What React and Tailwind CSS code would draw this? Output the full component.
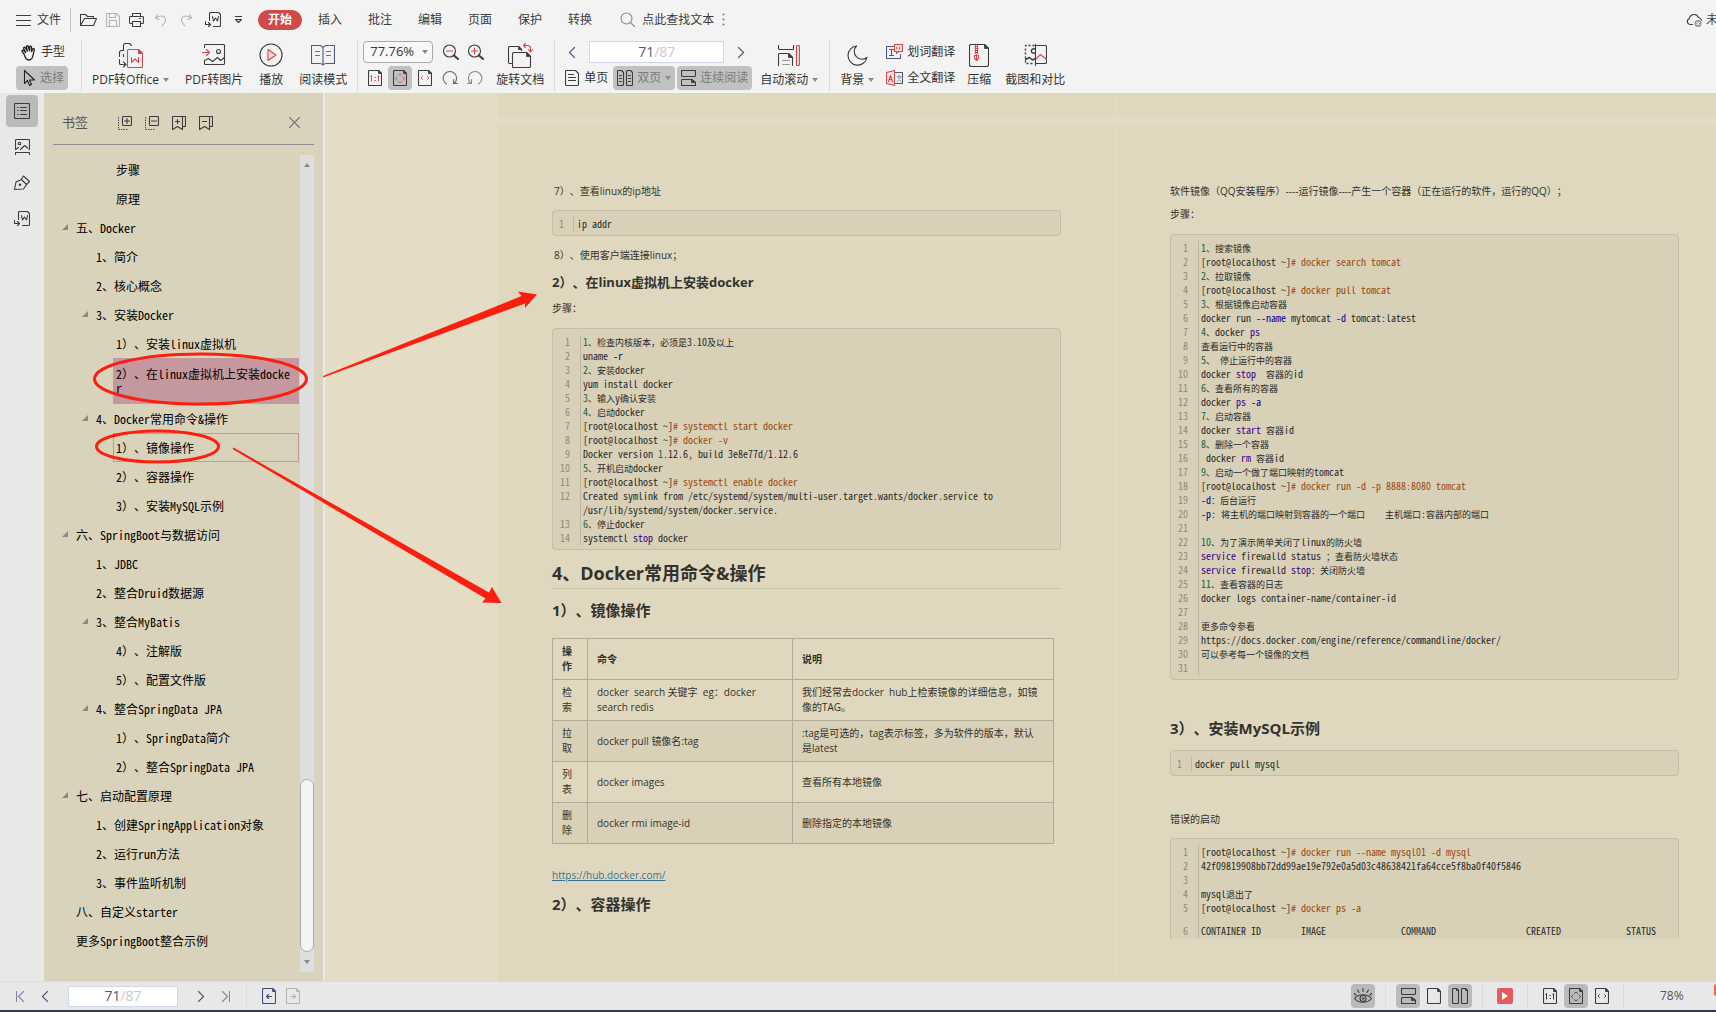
import { Fragment } from "react";

const ink = "#3c3c3c";
const red = "#d04a4b";

// The half-pixel origin keeps strokes on whole coordinates sharp
function Icon({ w = 16, h = w, color = ink, className = "", children }) {
  return (
    <svg
      width={w}
      height={h}
      viewBox={`-0.5 -0.5 ${w} ${h}`}
      fill="none"
      stroke={color}
      strokeWidth="1.1"
      strokeLinecap="round"
      strokeLinejoin="round"
      className={`shrink-0 ${className}`}
      aria-hidden="true"
    >
      {children}
    </svg>
  );
}

const Caret = () => (
  <svg width="6" height="4" viewBox="0 0 6 4" className="shrink-0" aria-hidden="true">
    <path d="M0 0h6L3 4z" fill="#8a8a8a" />
  </svg>
);

const sheet = "M1 0h9l3 3v11a1 1 0 0 1-1 1H1a1 1 0 0 1-1-1V1a1 1 0 0 1 1-1z";

const FoldCorner = () => <path d="M10 0v3h3z" fill={ink} strokeWidth="0.8" />;

function OneToOne({ tint = red }) {
  return (
    <Icon w={14} h={16}>
      <path d={sheet} />
      <FoldCorner />
      <path d="M2 6l1-1v6M9 6l1-1v6M6 7h1.400M6 10h1.400" stroke={tint} strokeLinecap="butt" strokeWidth="1" />
    </Icon>
  );
}

function FitPage({ tint = red }) {
  return (
    <Icon w={14} h={16}>
      <path d={sheet} />
      <FoldCorner />
      <path d="M5 4.800L6.500 3.500 8 4.800M5 11.200l1.500 1.300L8 11.200M3.300 6.500L2 8l1.300 1.500M9.700 6.500L11 8 9.700 9.500" stroke={tint} strokeWidth="0.9" />
    </Icon>
  );
}

function FitWidth({ tint = red }) {
  return (
    <Icon w={14} h={16}>
      <path d={sheet} />
      <FoldCorner />
      <path d="M4 6L2.500 7.500 4 9M9 6l1.500 1.500L9 9" stroke={tint} strokeWidth="0.9" />
    </Icon>
  );
}

const TwoPages = () => (
  <Icon w={16}>
    <path d="M1 0h3l2 2v12a1 1 0 0 1-1 1H1a1 1 0 0 1-1-1V1a1 1 0 0 1 1-1zM10 0h3l2 2v12a1 1 0 0 1-1 1h-4a1 1 0 0 1-1-1V1a1 1 0 0 1 1-1z" />
    <path d="M4 0v2h2zM13 0v2h2z" fill={ink} strokeWidth="0.8" />
  </Icon>
);

const TwoPagesText = () => (
  <Icon w={16}>
    <path d="M1 0h3l2 2v12a1 1 0 0 1-1 1H1a1 1 0 0 1-1-1V1a1 1 0 0 1 1-1zM10 0h3l2 2v12a1 1 0 0 1-1 1h-4a1 1 0 0 1-1-1V1a1 1 0 0 1 1-1z" />
    <path d="M2 5h2M2 8h2M2 11h2M11 5h2M11 8h2M11 11h2" />
  </Icon>
);

const Continuous = () => (
  <Icon w={15} h={16}>
    <path d="M0 0v5a1 1 0 0 0 1 1h12a1 1 0 0 0 1-1V0zM0 15v-5a1 1 0 0 1 1-1h9l4 3v3z" />
    <path d="M10 9v3h4z" fill={ink} strokeWidth="0.8" />
  </Icon>
);

const WordExport = () => (
  <Icon w={16}>
    <path d="M4 8V1a1 1 0 0 1 1-1h8l2 2v11a1 1 0 0 1-1 1H8" />
    <path d="M7 4l1 4.500 2-3 2 3L13 4M0 9v3h5M3 10l2 2-2 2" />
  </Icon>
);

const Chevron = ({ left, bar, color = "#4b5a7a" }) => (
  <Icon w={10} h={11} color={color}>
    <path d={left ? "M7 0L2 5l5 5" : "M2 0l5 5-5 5"} />
    {bar && <path d={left ? "M0 0v10" : "M9 0v10"} />}
  </Icon>
);

const Sep = ({ className = "" }) => (
  <span className={`w-px shrink-0 bg-[#dcdcdc] ${className}`} />
);

function Tool({ icon, label, caret }) {
  return (
    <button className="flex h-[50px] shrink-0 flex-col items-center justify-between whitespace-nowrap leading-5">
      <span className="flex h-[30px] items-center">{icon}</span>
      <span className="flex items-center gap-1">
        {label}
        {caret && <Caret />}
      </span>
    </button>
  );
}

const OfficeIcon = () => (
  <Icon w={25} h={25}>
    <path d="M5 7V2a2 2 0 0 1 2-2h4l2 2M5 7H3a2 2 0 0 0-2 2v4M5 11v2M1 16v4a1 1 0 0 0 1 1h5M5 18.500L7.500 21 5 23.500" />
    <path d="M10 6h10l4 4v13a1 1 0 0 1-1 1H10a1 1 0 0 1-1-1V7a1 1 0 0 1 1-1z" stroke={red} />
    <path d="M20 6v4h4z" fill={red} stroke={red} />
    <path d="M13 14v5l3.500-3.500L20 19v-5" stroke={red} />
  </Icon>
);

const PictureIcon = () => (
  <Icon w={24} h={22}>
    <path d="M2 3V1a1 1 0 0 1 1-1h18a1 1 0 0 1 1 1v18a1 1 0 0 1-1 1H3a1 1 0 0 1-1-1v-3l4-2 4 3 5-4 3 3 4-3" />
    <circle cx="16" cy="7" r="2" />
    <path d="M0 8h6M4 5l3 3-3 3" stroke={red} />
  </Icon>
);

const PlayIcon = () => (
  <Icon w={24} h={24}>
    <circle cx="11.500" cy="11.500" r="11" />
    <path d="M8.500 6v11l8-5.500z" stroke={red} fill="#f3dcdc" />
  </Icon>
);

const BookIcon = () => (
  <Icon w={24} h={21} color="#4b5a7a">
    <path d="M11.500 2C10.500.500 10 0 8 0H0v18h8c1.500 0 3 .500 3.500 1.500C12 18.500 13.500 18 15 18h8V0h-8c-2 0-2.500.500-3.500 2zM11.500 2v17.500" />
    <path d="M4 6h4M4 10h4M15 6h4M15 10h4" stroke={red} />
  </Icon>
);

const RotateDocIcon = () => (
  <Icon w={26} h={25}>
    <path d="M4 20H2a1 1 0 0 1-1-1V4a1 1 0 0 1 1-1h9l3 3v1" />
    <path d="M6 9h13l4 4v10a1 1 0 0 1-1 1H6a1 1 0 0 1-1-1V10a1 1 0 0 1 1-1z" />
    <path d="M11 3v3h3zM19 9v4h4z" fill={ink} strokeWidth="0.8" />
    <path d="M16 2h4a3 3 0 0 1 3 3v3M18 0l-2 2 2 2M21 6l2 2.500L25 6" stroke={red} />
  </Icon>
);

const AutoScrollIcon = () => (
  <Icon w={22} h={21}>
    <path d="M0 0v3a1 1 0 0 0 1 1h13a1 1 0 0 0 1-1V0M0 20V9a1 1 0 0 1 1-1h9l4 4v8" />
    <path d="M10 8v4h4z" fill={ink} strokeWidth="0.8" />
    <path d="M4 15h7M4 19h7" stroke="#999" />
    <rect x="18" y="0" width="3" height="20" rx="1" stroke={red} fill="#f3dcdc" />
  </Icon>
);

const MoonIcon = () => (
  <Icon w={21} h={21}>
    <path d="M9 .5A9.600 9.600 0 1 0 19.500 12 7.800 7.800 0 0 1 9 .5z" />
  </Icon>
);

const ZipIcon = () => (
  <Icon w={20} h={23}>
    <path d="M1 0h14l4 4v16a2 2 0 0 1-2 2H2a2 2 0 0 1-2-2V1z" />
    <path d="M15 0v4h4z" fill={ink} strokeWidth="0.8" />
    <path d="M6 1v8M8 1v8M5.500 2H7M7 4h1.500M5.500 6H7M7 8h1.500M7 10v5M5 11v3l2 2 2-2v-3z" stroke={red} />
  </Icon>
);

const CompareIcon = () => (
  <Icon w={23} h={22}>
    <path d="M10 1H1v18h9" strokeDasharray="2 2" strokeWidth="1.400" strokeLinecap="butt" />
    <path d="M11 0v21M12 1h9a1 1 0 0 1 1 1v16a1 1 0 0 1-1 1h-9" />
    <path d="M1 15l4-2 3 2.500 3-1.500M10 4.500a2.200 2.200 0 1 0 0 4" strokeWidth="1.400" />
    <path d="M12 14l4-4 6 5" stroke={red} />
  </Icon>
);

const HandIcon = () => (
  <Icon w={17} h={17} color="#222">
    <path d="M3.500 9.500L1.600 7.200c-.7-1 .6-2 1.500-1.100l2 2-2-4.200c-.4-1.100 1.200-1.700 1.800-.6l1.900 3.400L6 2.300c-.2-1.200 1.500-1.400 1.800-.3l1.200 4.300.3-3.900c.1-1.100 1.700-1 1.700.2v4.500l1.200-2.500c.5-1 1.900-.4 1.600.7L12.700 10c-.3 2.500-.7 5.500-4.500 5.500-3 0-3.800-3-4.700-6z" strokeWidth="1.300" />
  </Icon>
);

const CursorIcon = () => (
  <Icon w={12} h={17} color="#222">
    <path d="M1 0v13l3-3 2 5 2-1-2-4.500h5z" />
  </Icon>
);

function TopBar() {
  const tabs = ["插入", "批注", "编辑", "页面", "保护", "转换"];
  return (
    <div className="flex h-9 items-center pl-4 pt-1">
      <button className="flex items-center gap-[6px]">
        <Icon w={15} h={11}>
          <path d="M0 0h14M0 5h14M0 10h14" />
        </Icon>
        文件
      </button>
      <Sep className="mx-[9px] h-6 !bg-[#c4c4c4]" />
      <div className="flex items-center gap-[9px]">
        <button aria-label="打开">
          <Icon w={17} h={13}>
            <path d="M0 11V0h5l2 2h6v2M0 11l4-7h12l-3 7z" />
          </Icon>
        </button>
        <button aria-label="保存">
          <Icon w={14} h={14} color="#b5b5b5">
            <path d="M0 0h10l3 3v10H0zM3 0v4h6V0M3 13V7h7v6" />
          </Icon>
        </button>
        <button aria-label="打印">
          <Icon w={15} h={14}>
            <path d="M3 3V0h8v3M3 10H1a1 1 0 0 1-1-1V4a1 1 0 0 1 1-1h12a1 1 0 0 1 1 1v5a1 1 0 0 1-1 1h-2M3 8h8v5H3zM10 5h1" />
          </Icon>
        </button>
        <button aria-label="撤销">
          <Icon w={16} h={14} color="#b5b5b5">
            <path d="M4 1L2 4.500 5.500 6M2.500 4.500C7 1 12.500 2.500 12 7c-.3 2.500-2 4-3.500 5.500" />
          </Icon>
        </button>
        <button aria-label="重做">
          <Icon w={16} h={14} color="#b5b5b5">
            <path d="M11 1l2 3.500L9.500 6M12.500 4.500C8 1 2.500 2.500 3 7c.3 2.500 2 4 3.500 5.500" />
          </Icon>
        </button>
        <button aria-label="转换为Word" className="ml-[2px]">
          <WordExport />
        </button>
        <button aria-label="更多" className="ml-1">
          <Icon w={9} h={8}>
            <path d="M1 0h6M1 3h6L4 6z" />
          </Icon>
        </button>
      </div>
      <button className="ml-[15px] h-5 rounded-full bg-[#d04a4b] px-[10px] font-bold text-white">
        开始
      </button>
      <div className="ml-4 flex gap-[26px]">
        {tabs.map((t) => (
          <button key={t}>{t}</button>
        ))}
      </div>
      <label className="ml-7 flex items-center gap-[6px]">
        <Icon w={16} color="#8a8a8a">
          <circle cx="6" cy="6" r="5.500" />
          <path d="M10.500 10.500L14 14" />
        </Icon>
        <input
          aria-label="点此查找文本"
          placeholder="点此查找文本"
          className="w-[74px] bg-transparent outline-none placeholder:text-[#3c3c3c]"
        />
      </label>
      <Icon w={4} h={14} color="#777" className="ml-[6px]">
        <path d="M1 1v.1M1 6v.1M1 11v.1" strokeWidth="2" />
      </Icon>
      <button className="ml-auto flex w-[30px] shrink-0 items-center gap-[3px] overflow-hidden whitespace-nowrap">
        <Icon w={17} h={15}>
          <path d="M6 11H3.500a3 3 0 0 1-.7-5.800A4.800 4.800 0 0 1 12 4a3.800 3.800 0 0 1 3 3" />
          <circle cx="11.500" cy="10" r="3" fill="#999" stroke="#999" />
          <path d="M10.300 8.800l2.400 2.400M12.700 8.800l-2.400 2.400" stroke="#f3f3f3" />
        </Icon>
        未
      </button>
    </div>
  );
}

function Ribbon() {
  return (
    <div className="flex h-[57px] items-start pl-4 pt-1 text-[#333]">
      <div className="flex flex-col gap-[2px]">
        <button className="flex h-6 items-center gap-1 pl-1">
          <HandIcon />
          手型
        </button>
        <button className="flex h-6 w-[52px] items-center gap-[5px] rounded bg-[#c1c1c1] pl-[7px] text-[#7b7b7b]">
          <CursorIcon />
          选择
        </button>
      </div>
      <Sep className="ml-[13px] mr-[10px] h-[52px]" />
      <div className="flex gap-4">
        <Tool icon={<OfficeIcon />} label="PDF转Office" caret />
        <Tool icon={<PictureIcon />} label="PDF转图片" />
        <Tool icon={<PlayIcon />} label="播放" />
        <Tool icon={<BookIcon />} label="阅读模式" />
      </div>
      <Sep className="ml-[10px] mr-[5px] h-[52px]" />
      <div className="flex flex-col gap-[2px]">
        <div className="flex h-6 items-center">
          <div className="relative">
            <select
              aria-label="缩放"
              className="h-[22px] w-[70px] appearance-none rounded border border-[#a9a9a9] bg-[#f8f8f8] pl-[6px] text-[13px]"
            >
              <option>77.76%</option>
            </select>
            <span className="pointer-events-none absolute right-[5px] top-[9px]">
              <Caret />
            </span>
          </div>
          <button aria-label="缩小" className="ml-[9px]">
            <Icon w={17}>
              <circle cx="7" cy="6.500" r="6" />
              <path d="M11.500 11l4 3.500" strokeWidth="2" />
              <path d="M4 6.500h6" stroke={red} />
            </Icon>
          </button>
          <button aria-label="放大" className="ml-2">
            <Icon w={17}>
              <circle cx="7" cy="6.500" r="6" />
              <path d="M11.500 11l4 3.500" strokeWidth="2" />
              <path d="M4 6.500h6M7 3.500v6" stroke={red} />
            </Icon>
          </button>
        </div>
        <div className="flex h-6 items-center pl-[5px]">
          <button aria-label="实际大小">
            <OneToOne />
          </button>
          <button aria-label="适合页面" className="ml-[6px] flex size-6 items-center justify-center rounded bg-[#c1c1c1]">
            <FitPage />
          </button>
          <button aria-label="适合宽度" className="ml-[6px]">
            <FitWidth />
          </button>
          <button aria-label="向右旋转" className="ml-[10px]">
            <Icon w={16} color="#666">
              <path d="M4 13.500A6.700 6.700 0 1 1 11.500 13M11 9v4h4" />
            </Icon>
          </button>
          <button aria-label="向左旋转" className="ml-[9px]">
            <Icon w={16} color="#888">
              <path d="M11 13.500A6.700 6.700 0 1 0 3.500 13M4 9v4H0" />
            </Icon>
          </button>
        </div>
      </div>
      <div className="ml-3">
        <Tool icon={<RotateDocIcon />} label="旋转文档" />
      </div>
      <Sep className="ml-[10px] mr-[10px] h-[52px]" />
      <div className="flex flex-col gap-[2px]">
        <div className="flex h-6 items-center justify-between pl-[2px] pr-[6px]">
          <button aria-label="上一页">
            <Chevron left />
          </button>
          <div className="flex h-[22px] w-[135px] items-center justify-center border border-[#cfd8ea] bg-white text-[14px]">
            <input aria-label="页码" defaultValue="71" className="w-4 bg-transparent text-[#4b5a7a] outline-none" />
            <span className="text-[#c8c8c8]">/87</span>
          </div>
          <button aria-label="下一页">
            <Chevron />
          </button>
        </div>
        <div className="flex h-6 items-center">
          <button className="flex items-center gap-[5px]">
            <Icon w={14} h={16}>
              <path d={sheet} />
              <path d="M3 4h5M3 7h7M3 10h7" />
            </Icon>
            单页
          </button>
          <button className="ml-[5px] flex h-6 items-center gap-1 rounded bg-[#c1c1c1] px-1 text-[#7b7b7b]">
            <TwoPagesText />
            双页
            <Caret />
          </button>
          <button className="ml-[2px] flex h-6 items-center gap-1 rounded bg-[#c1c1c1] px-1 text-[#7b7b7b]">
            <Continuous />
            连续阅读
          </button>
        </div>
      </div>
      <div className="ml-2">
        <Tool icon={<AutoScrollIcon />} label="自动滚动" caret />
      </div>
      <Sep className="ml-[11px] mr-[10px] h-[52px]" />
      <Tool icon={<MoonIcon />} label="背景" caret />
      <div className="ml-3 flex flex-col gap-[2px]">
        <button className="flex h-6 items-center gap-1">
          <Icon w={17} color="#4b5a7a">
            <path d="M7 2H0v12h14v-4M3 5h4M5 5v6M3 11h4" />
            <path d="M8 0h8v7h-4l-2 2V7H8z" stroke={red} fill="#f8dede" />
            <path d="M10 3v1M13 3v1" stroke={red} />
          </Icon>
          划词翻译
        </button>
        <button className="flex h-6 items-center gap-1">
          <Icon w={17} color="#4b5a7a">
            <path d="M9 2h7v11H9" />
            <path d="M10.500 6H15M12.700 4.500V6M11 11l3.500-5M14.500 11L11 6" stroke="#9aa3b8" />
            <path d="M0 2l8-2v15l-8-2z" stroke={red} fill="#f8dede" />
            <path d="M2 11l2-6 2 6M2.700 9h2.600" stroke={red} />
          </Icon>
          全文翻译
        </button>
      </div>
      <div className="ml-3 flex gap-[14px]">
        <Tool icon={<ZipIcon />} label="压缩" />
        <Tool icon={<CompareIcon />} label="截图和对比" />
      </div>
    </div>
  );
}

function Rail() {
  return (
    <nav className="flex w-11 shrink-0 flex-col items-center gap-1 bg-[#e8e8e8] pt-[2px]">
      <button aria-label="书签" className="mr-px flex size-8 items-center justify-center rounded bg-[#bababa]">
        <Icon w={16}>
          <rect x="0" y="0" width="15" height="15" rx="1" />
          <path d="M3 4h.5M3 7h.5M3 11h.5M6 4h6M6 7h6M6 11h6" />
        </Icon>
      </button>
      <button aria-label="缩略图" className="flex size-8 items-center justify-center">
        <Icon w={15} h={16}>
          <path d="M0 10V1a1 1 0 0 1 1-1h12a1 1 0 0 1 1 1v9M0 13h14M0 15v-2M14 15v-2M0 10l3-2M5 10l4-4 5 4" />
          <circle cx="4" cy="4" r="1.300" />
        </Icon>
      </button>
      <button aria-label="签名" className="flex size-8 items-center justify-center">
        <Icon w={16}>
          <path d="M0 14L1.500 6.500 7 4l5 5-3 4.500L0 14zM7 3.500L9 .5 15 6l-3 3" />
          <circle cx="5.500" cy="9.300" r="0.700" fill={ink} />
        </Icon>
      </button>
      <button aria-label="导出" className="flex size-8 items-center justify-center">
        <WordExport />
      </button>
    </nav>
  );
}

const bookmarks = [
  [2, "步骤"],
  [2, "原理"],
  [0, "五、Docker", "open"],
  [1, "1、简介"],
  [1, "2、核心概念"],
  [1, "3、安装Docker", "open"],
  [2, "1）、安装linux虚拟机"],
  [2, "2）、在linux虚拟机上安装docker", "selected"],
  [1, "4、Docker常用命令&操作", "open"],
  [2, "1）、镜像操作", "focused"],
  [2, "2）、容器操作"],
  [2, "3）、安装MySQL示例"],
  [0, "六、SpringBoot与数据访问", "open"],
  [1, "1、JDBC"],
  [1, "2、整合Druid数据源"],
  [1, "3、整合MyBatis", "open"],
  [2, "4）、注解版"],
  [2, "5）、配置文件版"],
  [1, "4、整合SpringData JPA", "open"],
  [2, "1）、SpringData简介"],
  [2, "2）、整合SpringData JPA"],
  [0, "七、启动配置原理", "open"],
  [1, "1、创建SpringApplication对象"],
  [1, "2、运行run方法"],
  [1, "3、事件监听机制"],
  [0, "八、自定义starter"],
  [0, "更多SpringBoot整合示例"],
];

const indents = ["ml-5", "ml-10", "ml-[60px]"];

function Bookmark({ level, text, state }) {
  const box =
    state === "selected"
      ? "h-[46px] bg-[#c5989f]"
      : state === "focused"
        ? "h-[29px] outline outline-[#c5989f] -outline-offset-1"
        : "h-[29px]";
  return (
    <li className="flex items-center">
      <button
        className={`relative flex flex-1 items-center pl-[3px] pr-1 text-left leading-[14px] text-black break-all ${indents[level]} ${box}`}
      >
        {state === "open" && (
          <svg width="6" height="6" viewBox="0 0 6 6" className="absolute -left-[11px] top-[11px]" aria-hidden="true">
            <path d="M6 0v6H0z" fill="#8a8a8a" />
          </svg>
        )}
        {text}
      </button>
    </li>
  );
}

function Sidebar() {
  return (
    <aside className="flex w-[279px] shrink-0 flex-col bg-[#dad3bb] px-[9px] pb-[9px]">
      <header className="flex h-[52px] shrink-0 items-center border-b border-[#8b8c94] pl-[9px] pt-2">
        <h2 className="w-14 text-[13px] text-[#555]">书签</h2>
        <div className="flex flex-1 gap-[13px]">
          <button aria-label="全部展开">
            <Icon w={14}>
              <rect x="4" y="0" width="9" height="9" rx="1" />
              <path d="M6 4.500h5M8.500 2v5" />
              <path d="M0 1v12h9" strokeDasharray="0.500 2" />
            </Icon>
          </button>
          <button aria-label="全部收起">
            <Icon w={14}>
              <rect x="4" y="0" width="9" height="9" rx="1" />
              <path d="M6 4.500h5" />
              <path d="M0 1v12h9" strokeDasharray="0.500 2" />
            </Icon>
          </button>
          <button aria-label="添加书签">
            <Icon w={14}>
              <path d="M0 0h10v13l-5-3-5 3zM10 0h3v10h-3M3 5h4M5 3v4" />
            </Icon>
          </button>
          <button aria-label="删除书签">
            <Icon w={14}>
              <path d="M0 0h10v13l-5-3-5 3zM10 0h3v10h-3M3 5h4" />
            </Icon>
          </button>
        </div>
        <button aria-label="关闭" className="mr-[14px]">
          <Icon w={11} color="#777">
            <path d="M0 0l10 10M10 0L0 10" />
          </Icon>
        </button>
      </header>
      <div className="mt-[10px] flex min-h-0 flex-1">
        <ul className="flex-1 overflow-hidden pr-px font-['Noto_Sans_Mono_CJK_SC','Noto_Sans_CJK_SC',monospace]">
          {bookmarks.map(([level, text, state], i) => (
            <Bookmark key={i} level={level} text={text} state={state} />
          ))}
        </ul>
        <div className="flex w-[14px] flex-col items-center bg-[#dedede] py-2">
          <span className="rotate-180">
            <Caret />
          </span>
          <div className="flex w-full flex-1 flex-col justify-end pb-2">
            <div className="h-[173px] rounded-full border border-[#ababab] bg-[#f4f4f4]" />
          </div>
          <Caret />
        </div>
      </div>
    </aside>
  );
}

const tone = {
  n: "text-[#116644]",
  k: "text-[#33008c]",
  a: "text-[#00009c]",
  c: "text-[#9b4a0d]",
};

const shell = "[root@localhost ~]";

const installCode = [
  [["n", "1"], "、检查内核版本，必须是3.10及以上"],
  ["uname ", ["a", "-r"]],
  [["n", "2"], "、安装docker"],
  ["yum install docker"],
  [["n", "3"], "、输入y确认安装"],
  [["n", "4"], "、启动docker"],
  [shell, ["c", "# systemctl start docker"]],
  [shell, ["c", "# docker -v"]],
  ["Docker version ", ["n", "1"], ".12.6, build 3e8e77d/1.12.6"],
  [["n", "5"], "、开机启动docker"],
  [shell, ["c", "# systemctl enable docker"]],
  ["Created symlink from /etc/systemd/system/multi-user.target.wants/docker.service to\n/usr/lib/systemd/system/docker.service."],
  [["n", "6"], "、停止docker"],
  ["systemctl ", ["k", "stop"], " docker"],
];

const imageCode = [
  [["n", "1"], "、搜索镜像"],
  [shell, ["c", "# docker search tomcat"]],
  [["n", "2"], "、拉取镜像"],
  [shell, ["c", "# docker pull tomcat"]],
  [["n", "3"], "、根据镜像启动容器"],
  ["docker run ", ["a", "--name"], " mytomcat ", ["a", "-d"], " tomcat:latest"],
  [["n", "4"], "、docker ", ["k", "ps"]],
  ["查看运行中的容器"],
  [["n", "5"], "、 停止运行中的容器"],
  ["docker ", ["k", "stop"], "  容器的id"],
  [["n", "6"], "、查看所有的容器"],
  ["docker ", ["k", "ps"], " ", ["a", "-a"]],
  [["n", "7"], "、启动容器"],
  ["docker ", ["k", "start"], " 容器id"],
  [["n", "8"], "、删除一个容器"],
  [" docker ", ["k", "rm"], " 容器id"],
  [["n", "9"], "、启动一个做了端口映射的tomcat"],
  [shell, ["c", "# docker run -d -p 8888:8080 tomcat"]],
  [["a", "-d"], "：后台运行"],
  [["a", "-p"], ": 将主机的端口映射到容器的一个端口    主机端口:容器内部的端口"],
  [""],
  [["n", "10"], "、为了演示简单关闭了linux的防火墙"],
  [["k", "service"], " firewalld status ；查看防火墙状态"],
  [["k", "service"], " firewalld ", ["k", "stop"], "：关闭防火墙"],
  [["n", "11"], "、查看容器的日志"],
  ["docker logs container-name/container-id"],
  [""],
  ["更多命令参看"],
  ["https://docs.docker.com/engine/reference/commandline/docker/"],
  ["可以参考每一个镜像的文档"],
  [""],
];

const mysqlCode = [
  [shell, ["c", "# docker run --name mysql01 -d mysql"]],
  ["42f09819908bb72dd99ae19e792e0a5d03c48638421fa64cce5f8ba0f40f5846"],
  [""],
  ["mysql退出了"],
  [shell, ["c", "# docker ps -a"]],
];

const psHeader = ["CONTAINER ID".padEnd(20) + "IMAGE".padEnd(20) + "COMMAND".padEnd(25) + "CREATED".padEnd(20) + "STATUS"];

// Han runs are set one step smaller than the Latin code
function Mixed({ text }) {
  return text.split(/([^\x00-\x7e]+)/).map((run, i) =>
    i % 2 ? (
      <span key={i} className="font-['Noto_Sans_CJK_SC',sans-serif] text-[9px] leading-none">
        {run}
      </span>
    ) : (
      <Fragment key={i}>{run}</Fragment>
    ),
  );
}

function CodeLine({ parts }) {
  return parts.map((p, i) =>
    typeof p === "string" ? (
      <Mixed key={i} text={p} />
    ) : (
      <span key={i} className={tone[p[0]]}>
        {p[1]}
      </span>
    ),
  );
}

function CodeRow({ n, parts, narrow, spaced }) {
  const top = spaced ? "pt-[9px]" : "";
  return (
    <div className="flex">
      <span className={`shrink-0 text-right text-[#8f8b7c] ${top} ${narrow ? "w-[11px] mr-[9px]" : "w-[17px] mr-[10px]"}`}>
        {n}
      </span>
      <code
        className={`flex-1 whitespace-pre border-l border-[#bdb7a2] font-[inherit] ${top} ${narrow ? "pl-[3px]" : "pl-[2px]"}`}
      >
        <CodeLine parts={parts} />
      </code>
    </div>
  );
}

function CodeBlock({ lines, tail, narrow, className = "" }) {
  return (
    <div
      className={`border-[#c4bea8] bg-[#d8d1b8] pt-[6px] font-['Noto_Sans_Mono_CJK_SC','DejaVu_Sans_Mono',monospace] text-[10px] leading-[14px] text-[#2a2a28] ${
        tail ? "rounded-t-sm border-x border-t pb-px" : "rounded-sm border pb-1"
      } ${className}`}
    >
      {lines.map((parts, i) => (
        <CodeRow key={i} n={i + 1} parts={parts} narrow={narrow} />
      ))}
      {tail && <CodeRow n={lines.length + 1} parts={tail} spaced />}
    </div>
  );
}

const commands = [
  ["检索", "docker  search 关键字  eg：docker search redis", "我们经常去docker  hub上检索镜像的详细信息，如镜像的TAG。"],
  ["拉取", "docker pull 镜像名:tag", ":tag是可选的，tag表示标签，多为软件的版本，默认是latest"],
  ["列表", "docker images", "查看所有本地镜像"],
  ["删除", "docker rmi image-id", "删除指定的本地镜像"],
];

function CommandTable() {
  const cell = "h-[41px] border border-[#b0aa96] pl-[9px] pr-3 whitespace-pre-wrap";
  return (
    <table className="mt-[18px] w-[502px] table-fixed border-collapse text-left leading-[15px]">
      <colgroup>
        <col className="w-[35px]" />
        <col className="w-[205px]" />
        <col />
      </colgroup>
      <thead>
        <tr>
          {["操作", "命令", "说明"].map((h) => (
            <th key={h} className={cell}>
              {h}
            </th>
          ))}
        </tr>
      </thead>
      <tbody>
        {commands.map((row) => (
          <tr key={row[0]} className="even:bg-[#d8d1b8]">
            {row.map((c) => (
              <td key={c} className={cell}>
                {c}
              </td>
            ))}
          </tr>
        ))}
      </tbody>
    </table>
  );
}

function Document() {
  const page = "w-[617px] shrink-0 bg-[#dfd8be]";
  return (
    <main className="flex min-w-0 flex-1 flex-col overflow-hidden bg-[#e4dcc4] pl-[173px] text-[10px] leading-4 text-[#33322d]">
      <div className="mb-2 flex h-6 shrink-0 gap-px">
        <div className={page} />
        <div className={page} />
      </div>
      <div className="flex min-h-0 flex-1 gap-px">
        <article className={`${page} px-[54px] pt-[58px]`}>
          <p className="pl-[2px]">7）、查看linux的ip地址</p>
          <CodeBlock lines={[["ip addr"]]} narrow className="mt-[11px]" />
          <p className="mt-[11px] pl-[2px]">8）、使用客户端连接linux；</p>
          <h4 className="mt-[10px] text-[13px] font-bold leading-[18px]">2）、在linux虚拟机上安装docker</h4>
          <p className="mt-[9px]">步骤：</p>
          <CodeBlock lines={installCode} className="mt-3" />
          <h2 className="mt-[11px] border-b border-[#cdc6ae] pb-[3px] text-[18px] font-bold leading-6">
            4、Docker常用命令&操作
          </h2>
          <h3 className="mt-[11px] text-[15px] font-bold leading-5">1）、镜像操作</h3>
          <CommandTable />
          <p className="mt-[23px]">
            <a href="https://hub.docker.com/" className="text-[#3a7392] underline">
              https://hub.docker.com/
            </a>
          </p>
          <h3 className="mt-[11px] text-[15px] font-bold leading-5">2）、容器操作</h3>
        </article>
        <article className={`${page} px-[54px] pt-[58px]`}>
          <p className="whitespace-nowrap">
            软件镜像（QQ安装程序）----运行镜像----产生一个容器（正在运行的软件，运行的QQ）；
          </p>
          <p className="mt-[7px]">步骤：</p>
          <CodeBlock lines={imageCode} className="mt-3" />
          <h3 className="mt-[38px] text-[15px] font-bold leading-5">3）、安装MySQL示例</h3>
          <CodeBlock lines={[["docker pull mysql"]]} narrow className="mt-3" />
          <p className="mt-[35px]">错误的启动</p>
          <CodeBlock lines={mysqlCode} tail={psHeader} className="mt-[11px]" />
        </article>
      </div>
    </main>
  );
}

function StatusBar() {
  const on = "flex size-6 items-center justify-center rounded bg-[#bababa]";
  return (
    <footer className="flex h-[31px] shrink-0 items-center border-b-2 border-[#2f3b4d] border-t border-t-[#dcdcdc] bg-[#e8e8e8] pl-4 text-[#555]">
      <button aria-label="第一页">
        <Chevron left bar color="#7d879c" />
      </button>
      <button aria-label="上一页" className="ml-[14px]">
        <Chevron left />
      </button>
      <div className="ml-[18px] flex h-[21px] w-[110px] items-center justify-center border border-[#cfd8ea] bg-white text-[14px]">
        <input aria-label="当前页" defaultValue="71" className="w-4 bg-transparent text-[#4b5a7a] outline-none" />
        <span className="text-[#c8c8c8]">/87</span>
      </div>
      <button aria-label="下一页" className="ml-[18px]">
        <Chevron />
      </button>
      <button aria-label="最后一页" className="ml-[14px]">
        <Chevron bar color="#7d879c" />
      </button>
      <Sep className="ml-4 mr-[15px] h-6" />
      <button aria-label="后退">
        <Icon w={14} h={16} color="#3f4d70">
          <path d={sheet} />
          <path d="M10 0v3h3z" fill="#3f4d70" strokeWidth="0.8" />
          <path d="M4 8h5M6 6L4 8l2 2" />
        </Icon>
      </button>
      <button aria-label="前进" className="ml-[10px]">
        <Icon w={14} h={16} color="#b5b5b5">
          <path d={sheet} />
          <path d="M10 0v3h3M4 8h5M7 6l2 2-2 2" />
        </Icon>
      </button>
      <div className="ml-auto flex items-center">
        <button aria-label="护眼模式" className={on}>
          <Icon w={18} h={16}>
            <path d="M0 10c4-5 13-5 17 0-4 5-13 5-17 0zM8.500 0v3M3 1.500L4.500 4M14 1.500L12.500 4M0 5l1.500 1.500M17 5l-1.500 1.500" />
            <circle cx="8.500" cy="10" r="3" />
            <circle cx="8.500" cy="10" r="1" strokeWidth="0.8" />
          </Icon>
        </button>
        <Sep className="mx-[10px] h-6" />
        <button aria-label="连续阅读" className={on}>
          <Continuous />
        </button>
        <button aria-label="单页" className="mx-[7px]">
          <Icon w={14} h={16}>
            <path d={sheet} />
            <FoldCorner />
          </Icon>
        </button>
        <button aria-label="双页" className={on}>
          <TwoPages />
        </button>
        <Sep className="ml-[10px] mr-[14px] h-6" />
        <button aria-label="播放" className="flex size-4 items-center justify-center rounded-xs bg-[#e55b5b]">
          <svg width="6" height="8" viewBox="0 0 6 8" aria-hidden="true">
            <path d="M0 0l6 4-6 4z" fill="#fff" />
          </svg>
        </button>
        <Sep className="ml-[14px] mr-[15px] h-6" />
        <button aria-label="实际大小">
          <OneToOne tint={ink} />
        </button>
        <button aria-label="适合页面" className={`mx-[7px] ${on}`}>
          <FitPage tint={ink} />
        </button>
        <button aria-label="适合宽度">
          <FitWidth tint={ink} />
        </button>
        <Sep className="ml-[14px] h-6" />
        <span className="ml-9 w-[54px]">78%</span>
        <span className="h-3 w-[2px] self-start rounded-l-full bg-[#f2673a]" />
      </div>
    </footer>
  );
}

// Hand-drawn marks that lie over the window
function Marks() {
  return (
    <svg
      width="560"
      height="640"
      viewBox="0 0 560 640"
      className="pointer-events-none absolute left-0 top-0"
      aria-hidden="true"
    >
      <g fill="none" stroke="#fb1f10" strokeWidth="3">
        <ellipse cx="200.500" cy="379" rx="106" ry="25" />
        <ellipse cx="157.500" cy="446.500" rx="61" ry="15.500" />
      </g>
      <g fill="#fb1f10">
        <path d="M323 376l198.500-80-3.500-4.500 19 3-12 13.500v-4.500L323 377.500z" />
        <path d="M233.500 447.500L489 592.500l3-5.500 9.500 16-19.500-.5 3.500-4L232.500 449z" />
      </g>
    </svg>
  );
}

export default function App() {
  return (
    <div className="relative flex h-screen flex-col overflow-hidden bg-[#e8e8e8] font-['Open_Sans','Noto_Sans_CJK_SC',sans-serif] text-xs text-[#3c3c3c] [text-spacing-trim:space-all]">
      <div className="shrink-0 bg-[#f3f3f3]">
        <TopBar />
        <Ribbon />
      </div>
      <div className="flex min-h-0 flex-1">
        <Rail />
        <Sidebar />
        <div className="w-[2px] shrink-0 bg-[#e9e9e9]" />
        <Document />
      </div>
      <StatusBar />
      <Marks />
    </div>
  );
}
